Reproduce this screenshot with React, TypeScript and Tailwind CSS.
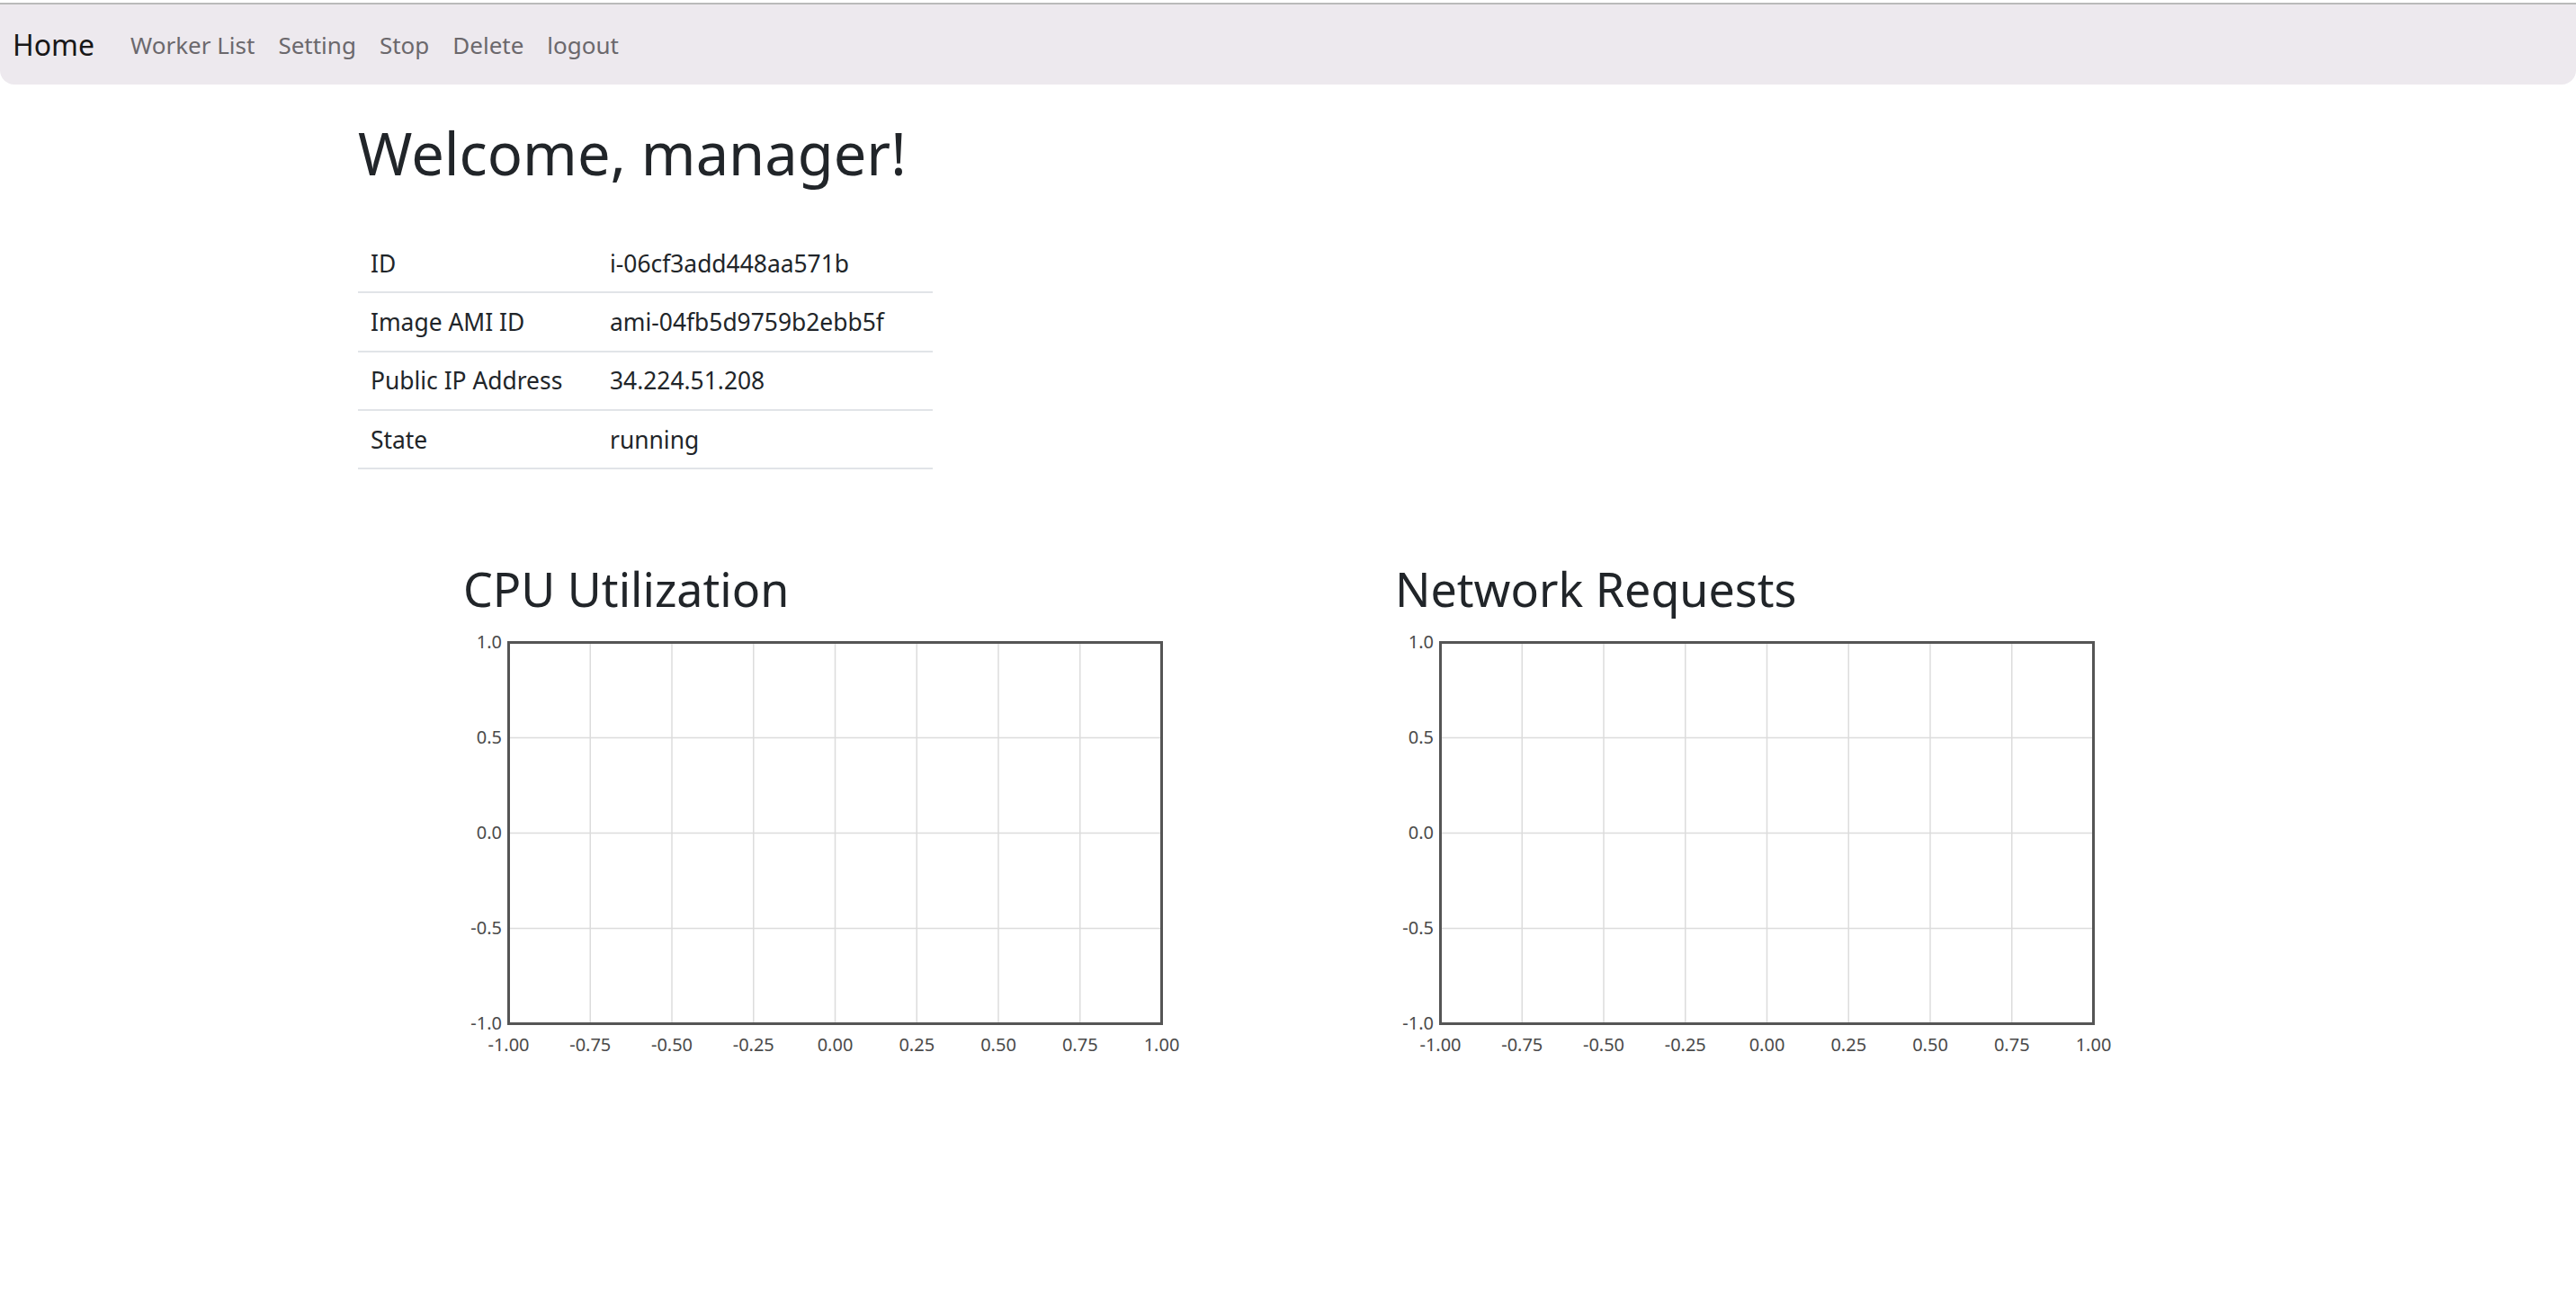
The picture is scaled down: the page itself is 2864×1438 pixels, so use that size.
import React from "react";

const xTicks = ["-1.00", "-0.75", "-0.50", "-0.25", "0.00", "0.25", "0.50", "0.75", "1.00"];
const yTicks = ["1.0", "0.5", "0.0", "-0.5", "-1.0"];

function Chart({ title }: { title: string }) {
  const x0 = 50.5;
  const y0 = 14.5;
  const w = 726;
  const h = 424;
  const dx = w / 8;
  const dy = h / 4;
  return (
    <div className="w-[1036px] shrink-0">
      <h2 className="text-[52px] leading-[64px] font-normal text-[#212529]">{title}</h2>
      <svg width="800" height="480" className="mt-[13px] block" style={{ fontFamily: '"Noto Sans", sans-serif' }}>
        {Array.from({ length: 7 }).map((_, i) => (
          <line key={"v" + i} x1={x0 + dx * (i + 1)} x2={x0 + dx * (i + 1)} y1={y0} y2={y0 + h} stroke="#dcdcdc" strokeWidth={1.5} />
        ))}
        {Array.from({ length: 3 }).map((_, j) => (
          <line key={"h" + j} x1={x0} x2={x0 + w} y1={y0 + dy * (j + 1)} y2={y0 + dy * (j + 1)} stroke="#dcdcdc" strokeWidth={1.5} />
        ))}
        <rect x={x0} y={y0} width={w} height={h} fill="none" stroke="#555555" strokeWidth={3} />
        {yTicks.map((t, j) => (
          <text key={t} x={43} y={y0 + dy * j + 1} textAnchor="end" dominantBaseline="middle" fontSize={20} fill="#4a4a4a">
            {t}
          </text>
        ))}
        {xTicks.map((t, i) => (
          <text key={t} x={x0 + dx * i} y={469} textAnchor="middle" fontSize={20} fill="#4a4a4a">
            {t}
          </text>
        ))}
      </svg>
    </div>
  );
}

const rows: [string, string][] = [
  ["ID", "i-06cf3add448aa571b"],
  ["Image AMI ID", "ami-04fb5d9759b2ebb5f"],
  ["Public IP Address", "34.224.51.208"],
  ["State", "running"],
];

export default function App() {
  return (
    <div className="min-h-[1438px] bg-white" style={{ fontFamily: '"Noto Sans", "Open Sans", sans-serif' }}>
      <div className="h-[3px] bg-white" />
      <div className="h-[2px] bg-[#bababa]" />
      <nav className="h-[89px] bg-[#ede9ee] rounded-b-[16px] flex items-center pl-[14px]">
        <span className="text-[32px] leading-[40px] text-[#181718] mr-[40px]">Home</span>
        <div className="flex gap-[26px] text-[26px] leading-[40px] text-[#6b686c]">
          <span>Worker List</span>
          <span>Setting</span>
          <span>Stop</span>
          <span>Delete</span>
          <span>logout</span>
        </div>
      </nav>
      <div className="pl-[398px]">
        <h1 className="mt-[38px] text-[65px] leading-[77px] font-normal text-[#212529]">Welcome, manager!</h1>
        <div className="mt-[52px] w-[639px] text-[26.4px] text-[#212529]">
          {rows.map(([k, v]) => (
            <div key={k} className="h-[65.3px] border-b-2 border-[#e1e4e8] flex items-center pt-[2px]">
              <div className="w-[280px] pl-[14px]">{k}</div>
              <div>{v}</div>
            </div>
          ))}
        </div>
      </div>
      <div className="flex pl-[515px] mt-[101px]">
        <Chart title="CPU Utilization" />
        <Chart title="Network Requests" />
      </div>
    </div>
  );
}
